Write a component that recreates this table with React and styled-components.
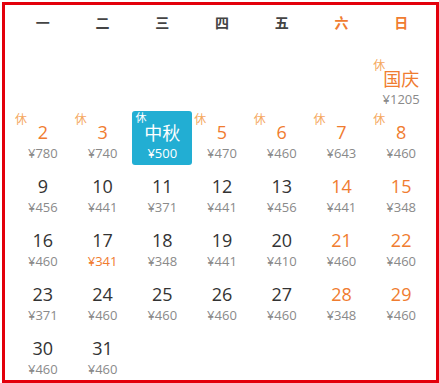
import React from "react";
import styled, { createGlobalStyle } from "styled-components";

const Global = createGlobalStyle`
  html, body { margin: 0; padding: 0; background: #fff; }
  body { font-family: "Open Sans", "Noto Sans CJK SC", sans-serif; }
`;

const Frame = styled.div`
  margin: 2px 0 0 2px;
  width: 437px;
  height: 381px;
  box-sizing: border-box;
  border: 3px solid #e3000b;
  padding: 0 5px 0 8px;
  background: #fff;
`;

const Header = styled.div`
  display: grid;
  grid-template-columns: repeat(7, 1fr);
  height: 52px;
`;

const HeadCell = styled.div`
  text-align: center;
  font-family: "Noto Sans CJK SC", sans-serif;
  font-size: 14px;
  font-weight: 700;
  line-height: 34px;
  color: ${(p) => (p.$weekend ? "#f07c30" : "#444")};
`;

const Grid = styled.div`
  display: grid;
  grid-template-columns: repeat(7, 1fr);
  grid-auto-rows: 54px;
`;

const Cell = styled.div`
  position: relative;
  display: flex;
  flex-direction: column;
  align-items: center;
  padding-top: 10px;
  box-sizing: border-box;
  border-radius: 3px;
  background: ${(p) => (p.$active ? "#22aed3" : "transparent")};
`;

const Rest = styled.span`
  position: absolute;
  top: ${(p) => (p.$active ? "0" : "1px")};
  left: ${(p) => (p.$active ? "3px" : "2px")};
  font-family: "Noto Sans CJK SC", sans-serif;
  font-size: ${(p) => (p.$active ? "11px" : "12px")};
  line-height: ${(p) => (p.$active ? "12px" : "14px")};
  color: ${(p) => (p.$active ? "#fff" : "#f5a860")};
`;

const DateText = styled.div`
  font-family: ${(p) =>
    p.$cjk ? '"Noto Sans CJK SC", sans-serif' : '"Open Sans", "Noto Sans CJK SC", sans-serif'};
  font-size: 18px;
  line-height: 22px;
  color: ${(p) => (p.$active ? "#fff" : p.$orange ? "#f07c30" : "#333")};
`;

const Price = styled.div`
  font-family: "Open Sans", "Noto Sans CJK SC", sans-serif;
  font-size: 13px;
  line-height: 20px;
  color: ${(p) => (p.$active ? "#fff" : p.$orange ? "#f07c30" : "#8a8a8a")};
`;

const heads = ["一", "二", "三", "四", "五", "六", "日"];

const days = [
  null, null, null, null, null, null,
  { d: "国庆", p: 1205, rest: true, orange: true, cjk: true },
  { d: "2", p: 780, rest: true, orange: true },
  { d: "3", p: 740, rest: true, orange: true },
  { d: "中秋", p: 500, rest: true, active: true, cjk: true },
  { d: "5", p: 470, rest: true, orange: true },
  { d: "6", p: 460, rest: true, orange: true },
  { d: "7", p: 643, rest: true, orange: true },
  { d: "8", p: 460, rest: true, orange: true },
  { d: "9", p: 456 },
  { d: "10", p: 441 },
  { d: "11", p: 371 },
  { d: "12", p: 441 },
  { d: "13", p: 456 },
  { d: "14", p: 441, orange: true },
  { d: "15", p: 348, orange: true },
  { d: "16", p: 460 },
  { d: "17", p: 341, cheap: true },
  { d: "18", p: 348 },
  { d: "19", p: 441 },
  { d: "20", p: 410 },
  { d: "21", p: 460, orange: true },
  { d: "22", p: 460, orange: true },
  { d: "23", p: 371 },
  { d: "24", p: 460 },
  { d: "25", p: 460 },
  { d: "26", p: 460 },
  { d: "27", p: 460 },
  { d: "28", p: 348, orange: true },
  { d: "29", p: 460, orange: true },
  { d: "30", p: 460 },
  { d: "31", p: 460 },
];

export default function App() {
  return (
    <>
      <Global />
      <Frame>
        <Header>
          {heads.map((h, i) => (
            <HeadCell key={h} $weekend={i >= 5}>
              {h}
            </HeadCell>
          ))}
        </Header>
        <Grid>
          {days.map((day, i) =>
            day ? (
              <Cell key={i} $active={day.active}>
                {day.rest && <Rest $active={day.active}>休</Rest>}
                <DateText $cjk={day.cjk} $orange={day.orange} $active={day.active}>
                  {day.d}
                </DateText>
                <Price $active={day.active} $orange={day.cheap}>
                  ¥{day.p}
                </Price>
              </Cell>
            ) : (
              <Cell key={i} />
            )
          )}
        </Grid>
      </Frame>
    </>
  );
}
